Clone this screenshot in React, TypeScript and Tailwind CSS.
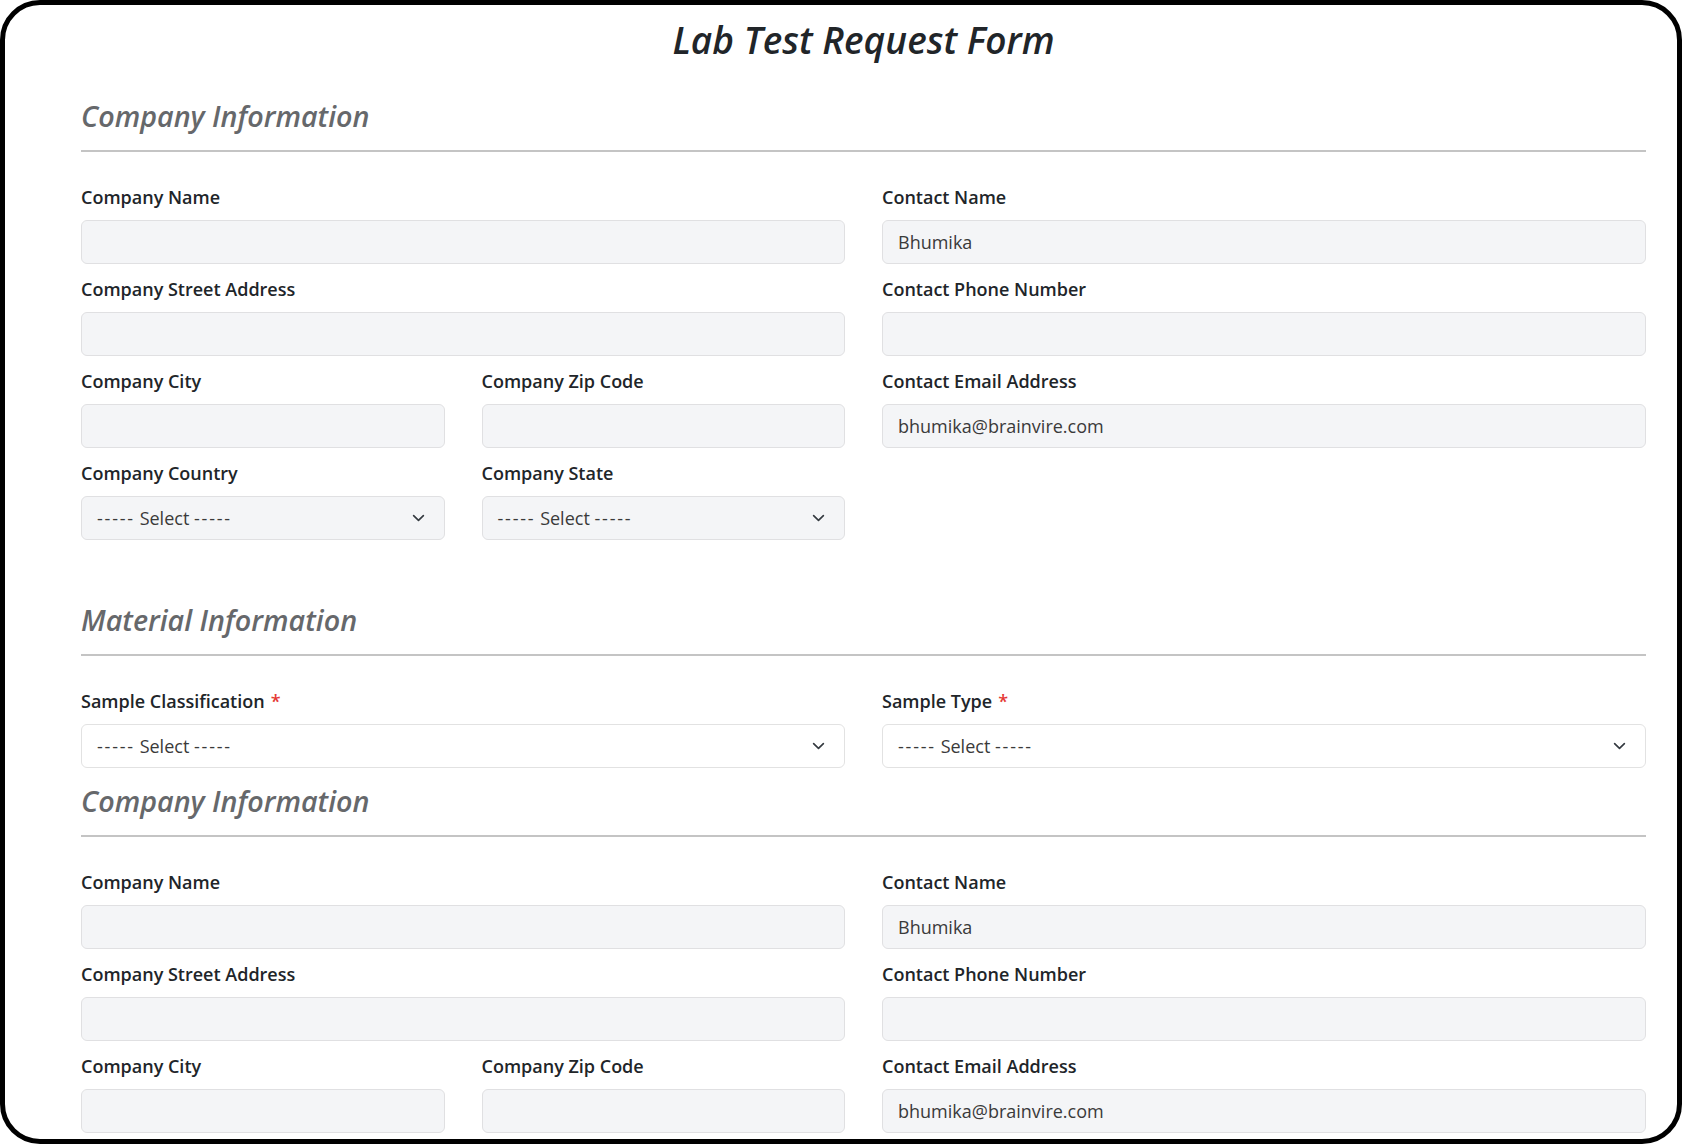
import React from 'react';

const font = { fontFamily: '"Open Sans", "Noto Sans", sans-serif' };

function Chevron() {
  return (
    <svg className="pointer-events-none absolute right-[17px] top-1/2 -translate-y-1/2" width="17" height="13" viewBox="0 0 16 16" fill="none">
      <path d="m2 5 6 6 6-6" stroke="#343a40" strokeWidth="2" strokeLinecap="round" strokeLinejoin="round" />
    </svg>
  );
}

function SelectText() {
  return (
    <span>
      <span className="tracking-[1.8px]">-----</span> Select <span className="tracking-[1.8px]">-----</span>
    </span>
  );
}

function Field({ label, value, span = 'col-span-2', select = false, white = false, required = false }: {
  label: string;
  value?: string;
  span?: string;
  select?: boolean;
  white?: boolean;
  required?: boolean;
}) {
  return (
    <div className={span}>
      <label className="block text-[18px] leading-[24px] font-[550] text-[#212529] mb-[11px]">
        {label}
        {required && <span className="text-[#e53935] ml-[6px]">*</span>}
      </label>
      <div
        className={
          'relative h-[44px] rounded-[6px] border flex items-center px-[15px] text-[18px] text-[#3a3a3a] ' +
          (white ? 'bg-white border-[#e2e2e2]' : 'bg-[#f4f5f7] border-[#e0e0e2]')
        }
      >
        {select ? <SelectText /> : value}
        {select && <Chevron />}
      </div>
    </div>
  );
}

function SectionTitle({ children, top }: { children: React.ReactNode; top: string }) {
  return (
    <div className={top}>
      <h2 className="text-[28.7px] leading-[36px] italic font-semibold text-[#66686b]">{children}</h2>
      <div className="mt-[16px] h-[2px] bg-[#c4c4c4]" />
    </div>
  );
}

function CompanyGrid() {
  return (
    <div className="mt-[33px] grid grid-cols-4 gap-x-[37px] gap-y-[13px]">
      <Field label="Company Name" />
      <Field label="Contact Name" value="Bhumika" />
      <Field label="Company Street Address" />
      <Field label="Contact Phone Number" />
      <Field label="Company City" span="col-span-1" />
      <Field label="Company Zip Code" span="col-span-1" />
      <Field label="Contact Email Address" value="bhumika@brainvire.com" />
      <Field label="Company Country" span="col-span-1" select />
      <Field label="Company State" span="col-span-1" select />
    </div>
  );
}

export default function App() {
  return (
    <div className="h-screen w-full bg-white">
      <div className="h-full w-full overflow-hidden rounded-[40px] border-[5px] border-black bg-white pl-[76px] pr-[31px] pt-[11px]" style={font}>
        <h1 className="text-center text-[37px] leading-[48px] italic font-semibold text-[#212529]">Lab Test Request Form</h1>

        <SectionTitle top="mt-[34px]">Company Information</SectionTitle>
        <CompanyGrid />

        <SectionTitle top="mt-[62px]">Material Information</SectionTitle>
        <div className="mt-[33px] grid grid-cols-4 gap-x-[37px] gap-y-[13px]">
          <Field label="Sample Classification" select white required />
          <Field label="Sample Type" select white required />
        </div>

        <SectionTitle top="mt-[15px]">Company Information</SectionTitle>
        <CompanyGrid />
      </div>
    </div>
  );
}
